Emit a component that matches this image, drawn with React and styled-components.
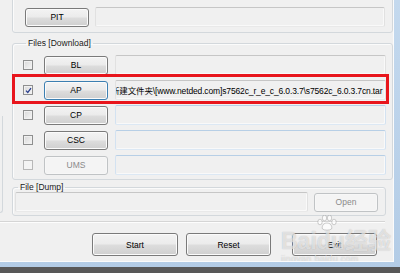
import styled, { createGlobalStyle } from "styled-components"

const Global = createGlobalStyle`
  html, body { margin: 0; padding: 0; }
  body {
    background: #585858;
    font-family: "Liberation Sans", Tahoma, "Noto Sans CJK SC", sans-serif;
  }
`

const Screen = styled.div`
  width: 400px;
  height: 273px;
  overflow: hidden;
  background: #585858;
`

const Frame = styled.div`
  width: 400px;
  height: 267px;
  box-sizing: border-box;
  padding: 0 6px 5px 0;
  background: linear-gradient(to bottom, #c4d9ee, #b3cce6);
`

const Client = styled.div`
  position: relative;
  width: 100%;
  height: 100%;
  box-sizing: border-box;
  background: #f0f0f0;
  border-right: 1px solid #fbfbfb;
  border-bottom: 1px solid #fbfbfb;
  overflow: hidden;
  display: flex;
  flex-direction: column;
  font-size: 8.5px;
  color: #111;
`

const Upper = styled.div`
  display: flex;
  align-items: flex-start;
`

const LeftStub = styled.div`
  flex: none;
  width: 3px;
  height: 97px;
  margin-top: 116px;
  box-sizing: border-box;
  border-right: 1px solid #d3d8dc;
  border-bottom: 1px solid #d3d8dc;
  border-bottom-right-radius: 3px;
`

const MainCol = styled.div`
  flex: 1;
  margin-left: 9px;
  margin-top: -9px;
  display: flex;
  flex-direction: column;
`

const Group = styled.fieldset`
  margin: ${p => p.$mt || 0}px ${p => p.$mr || 0}px 0 0;
  padding: ${p => p.$pad};
  border: 1px solid #d3d8dc;
  border-radius: 3px;
  min-width: 0;
  box-shadow: inset 1px 1px 0 #fbfbfb;
`

const Legend = styled.legend`
  margin-left: 3px;
  padding: 0 2px;
  font-size: 8.5px;
  line-height: ${p => p.$lh || 10}px;
  color: #1a1a1a;
`

const Rows = styled.div`
  display: flex;
  flex-direction: column;
  gap: 5px;
`

const Row = styled.div`
  display: flex;
  align-items: center;
  height: 20px;
  gap: ${p => p.$gap || 7}px;
`

const CheckSlot = styled.div`
  width: 14px;
  display: flex;
  justify-content: flex-start;
`

const Check = styled.span`
  width: 10px;
  height: 10px;
  box-sizing: border-box;
  border: 1px solid ${p => (p.$disabled ? "#b8b8b8" : "#8e8f8f")};
  background: ${p =>
    p.$disabled ? "#f4f4f4" : "linear-gradient(135deg, #d8d8d8, #f6f6f6)"};
  box-shadow: inset 0 0 0 1px ${p => (p.$disabled ? "#f4f4f4" : "#f0f0f0")};
  display: flex;
  align-items: center;
  justify-content: center;
  svg { display: block; }
`

const Button = styled.div`
  flex: none;
  width: ${p => p.$w || 64}px;
  height: ${p => p.$h || 19}px;
  box-sizing: border-box;
  border: 1px solid ${p => (p.$disabled ? "#c0c3c5" : p.$focus ? "#3c7fb1" : "#7a7a7a")};
  border-radius: 3px;
  background: ${p =>
    p.$disabled
      ? "#f4f4f4"
      : "linear-gradient(to bottom, #f3f3f3 0%, #ebebeb 48%, #dddddd 52%, #cfcfcf 100%)"};
  box-shadow: inset 0 0 0 1px ${p => (p.$disabled ? "#f7f7f7" : "#fbfbfb")};
  color: ${p => (p.$disabled ? "#8a8a8a" : "#000")};
  font-size: 8.5px;
  display: flex;
  align-items: center;
  justify-content: center;
  margin-left: ${p => p.$ml || 0}px;
`

const Field = styled.div`
  flex: ${p => (p.$w ? "none" : 1)};
  width: ${p => (p.$w ? `${p.$w}px` : "auto")};
  height: 20px;
  box-sizing: border-box;
  border: 1px solid;
  border-color: ${p =>
    p.$tone === "blue"
      ? "#b7cfe6 #d3e2f1 #dce8f4 #d3e2f1"
      : "#c6c6c6 #e1e1e1 #e9e9e9 #e1e1e1"};
  border-radius: 2px;
  background: #f0f0f0;
  box-shadow: inset -1px -1px 0 #f9f9f9;
  overflow: hidden;
  display: flex;
  align-items: center;
  white-space: nowrap;
  font-size: 8.5px;
  color: #000;
`

const Path = styled.span`
  margin-left: -5px;
  letter-spacing: -0.14px;
  font-family: "Liberation Sans", "Noto Sans CJK SC", sans-serif;
`

const Separator = styled.div`
  width: 385px;
  margin-top: 5px;
  border-top: 1px solid #d5d5d5;
  border-bottom: 1px solid #fdfdfd;
`

const ButtonBar = styled.div`
  display: flex;
  gap: 8px;
  padding-left: 92px;
  margin-top: 10px;
`

const RedBox = styled.div`
  position: absolute;
  left: 12px;
  top: 74px;
  width: 377px;
  height: 30px;
  box-sizing: border-box;
  border: 3px solid #e8151c;
`

const Watermark = styled.div`
  position: absolute;
  left: 281px;
  top: 218px;
  display: flex;
  flex-direction: column;
  align-items: flex-start;
  color: rgba(255, 255, 255, 0.62);
  text-shadow: 0 0 1px rgba(100, 100, 100, 0.45);
  pointer-events: none;
`

const WmBig = styled.div`
  position: relative;
  font-family: "Liberation Sans", "Noto Sans CJK SC", sans-serif;
  font-weight: bold;
  font-size: 23px;
  line-height: 26px;
  margin-top: 10px;
  svg { position: absolute; left: 36px; top: -13px; }
`

const WmSmall = styled.div`
  font-family: "Liberation Sans", sans-serif;
  font-size: 9px;
  line-height: 10px;
  letter-spacing: 0.3px;
`

const files = [
  { name: "BL", tone: "gray" },
  { name: "AP", tone: "gray", checked: true, focus: true },
  { name: "CP", tone: "blue" },
  { name: "CSC", tone: "blue" },
  { name: "UMS", tone: "blue", disabled: true },
]

function Tick() {
  return (
    <svg width="7" height="7" viewBox="0 0 7 7">
      <path d="M1 3.6 L2.8 5.4 L6 1.2" fill="none" stroke="#2a3f8f" strokeWidth="1.3" />
    </svg>
  )
}

function Paw() {
  return (
    <svg width="20" height="16" viewBox="0 0 20 16">
      <g fill="rgba(255,255,255,0.7)" stroke="rgba(110,110,110,0.4)" strokeWidth="0.8">
        <ellipse cx="3" cy="7" rx="2.2" ry="2.8" />
        <ellipse cx="7.5" cy="3" rx="2.2" ry="2.8" />
        <ellipse cx="12.5" cy="3" rx="2.2" ry="2.8" />
        <ellipse cx="17" cy="7" rx="2.2" ry="2.8" />
        <path d="M10 8 C6 8 4.5 12 5.5 14 C7 15.5 13 15.5 14.5 14 C15.5 12 14 8 10 8 Z" />
      </g>
    </svg>
  )
}

export default function App() {
  return (
    <Screen>
      <Global />
      <Frame>
        <Client>
          <Upper>
            <LeftStub />
            <MainCol>
              <Group $pad="6px 7px 5px 12px">
                <Legend>Re-Partition</Legend>
                <Row $gap={6}>
                  <Button>PIT</Button>
                  <Field $tone="gray" />
                </Row>
              </Group>

              <Group $mt={5} $pad="7px 6px 4px 10px">
                <Legend>Files [Download]</Legend>
                <Rows>
                  {files.map(f => (
                    <Row key={f.name}>
                      <CheckSlot>
                        <Check $disabled={f.disabled}>{f.checked && <Tick />}</Check>
                      </CheckSlot>
                      <Button $disabled={f.disabled} $focus={f.focus}>{f.name}</Button>
                      <Field $tone={f.tone}>
                        {f.checked && (
                          <Path>新建文件夹\[www.netded.com]s7562c_r_e_c_6.0.3.7\s7562c_6.0.3.7cn.tar</Path>
                        )}
                      </Field>
                    </Row>
                  ))}
                </Rows>
              </Group>

              <Group $mt={3} $mr={7} $pad="0 7px 3px 2px">
                <Legend $lh={9}>File [Dump]</Legend>
                <Row $gap={6}>
                  <Field $tone="gray" />
                  <Button $disabled>Open</Button>
                </Row>
              </Group>
            </MainCol>
          </Upper>

          <Separator />

          <ButtonBar>
            <Button $w={86} $h={23}>Start</Button>
            <Button $w={85} $h={23}>Reset</Button>
            <Button $w={85} $h={23} $ml={13}>Exit</Button>
          </ButtonBar>

          <RedBox />

          <Watermark>
            <WmBig>
              Baidu经验
              <Paw />
            </WmBig>
            <WmSmall>jingyan.baidu.com</WmSmall>
          </Watermark>
        </Client>
      </Frame>
    </Screen>
  )
}
